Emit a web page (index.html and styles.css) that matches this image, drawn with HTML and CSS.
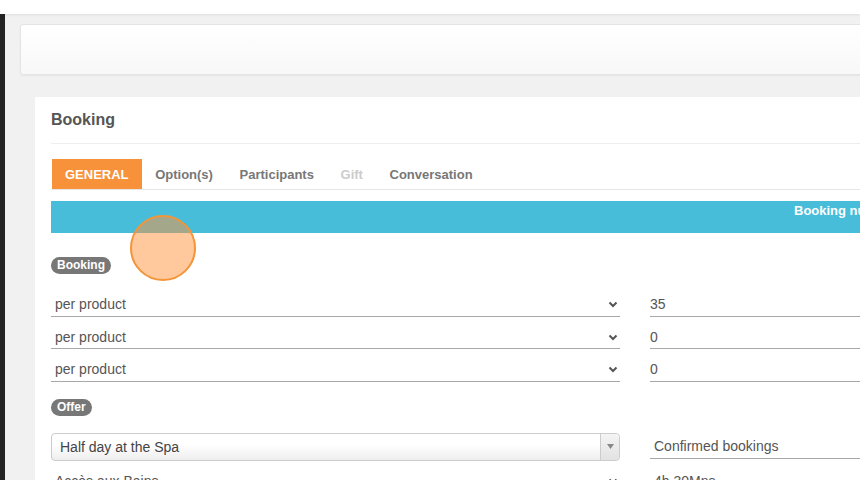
FILE: index.html
```html
<!DOCTYPE html>
<html lang="en">
<head>
  <meta charset="UTF-8">
  <title>Booking</title>
  <link rel="stylesheet" href="styles.css">
</head>
<body>

  <div class="topbar"></div>

  <div class="layout">
    <aside class="sidebar"></aside>

    <main class="content">
      <div class="toolbar-card"></div>

      <section class="card">
        <h2 class="card-title">Booking</h2>

        <nav class="tabs">
          <a class="tab active">GENERAL</a>
          <a class="tab">Option(s)</a>
          <a class="tab">Participants</a>
          <a class="tab disabled">Gift</a>
          <a class="tab">Conversation</a>
        </nav>

        <div class="status-bar">Booking number : 10458</div>

        <span class="badge badge-first">Booking</span>

        <div class="form-grid">
          <div class="field select">per product
            <svg class="chevron" width="10" height="7" viewBox="0 0 10 7"><polyline points="1.5,1.5 5,5 8.5,1.5" fill="none" stroke="#555" stroke-width="2"/></svg>
          </div>
          <div class="field number">35</div>

          <div class="field select">per product
            <svg class="chevron" width="10" height="7" viewBox="0 0 10 7"><polyline points="1.5,1.5 5,5 8.5,1.5" fill="none" stroke="#555" stroke-width="2"/></svg>
          </div>
          <div class="field number">0</div>

          <div class="field select">per product
            <svg class="chevron" width="10" height="7" viewBox="0 0 10 7"><polyline points="1.5,1.5 5,5 8.5,1.5" fill="none" stroke="#555" stroke-width="2"/></svg>
          </div>
          <div class="field number">0</div>
        </div>

        <span class="badge badge-offer">Offer</span>

        <div class="form-grid offer-grid">
          <div class="combo">
            <span class="combo-text">Half day at the Spa</span>
            <span class="combo-arrow">
              <svg width="7" height="5" viewBox="0 0 7 5"><polygon points="0,0 7,0 3.5,5" fill="#888"/></svg>
            </span>
          </div>
          <div class="field short">Confirmed bookings</div>

          <div class="field select">Accès aux Bains
            <svg class="chevron" width="10" height="7" viewBox="0 0 10 7"><polyline points="1.5,1.5 5,5 8.5,1.5" fill="none" stroke="#555" stroke-width="2"/></svg>
          </div>
          <div class="field">4h 30Mns</div>
        </div>
      </section>
    </main>
  </div>

  <div class="cursor-dot"></div>

</body>
</html>
```

FILE: styles.css
```css
body {
  margin: 0;
  background: #f1f1f1;
  font-family: 'Liberation Sans', Arial, sans-serif;
  color: #555;
  overflow: hidden;
  height: 480px;
  position: relative;
}
.topbar {
  height: 14px;
  background: #fff;
  box-shadow: 0 1px 3px rgba(0, 0, 0, 0.08);
  position: relative;
  z-index: 2;
}
.layout {
  display: flex;
  width: 1300px;
}
.sidebar {
  width: 5px;
  background: #232323;
  height: 466px;
}
.content {
  flex: 1;
  padding: 10px 0 0 15px;
}
.toolbar-card {
  height: 49px;
  background: linear-gradient(#fff, #f8f8f8);
  border: 1px solid #e4e4e4;
  border-radius: 3px;
  box-shadow: 0 1px 2px rgba(0, 0, 0, 0.05);
  margin-bottom: 22px;
}
.card {
  background: #fff;
  margin-left: 15px;
  width: 1152px;
  padding: 0 16px;
  height: 400px;
}
.card-title {
  margin: 0;
  padding: 13px 0 13px;
  font-size: 16px;
  line-height: 20px;
  font-weight: bold;
  color: #555;
  border-bottom: 1px solid #eee;
}
.tabs {
  display: flex;
  gap: 0.6px;
  margin-top: 15px;
  padding-left: 1px;
  border-bottom: 1px solid #e6e6e6;
}
.tab {
  height: 30px;
  line-height: 31px;
  padding: 0 13px;
  font-size: 13px;
  font-weight: bold;
  color: #777;
}
.tab.active {
  background: #f7913a;
  color: #fff;
}
.tab.disabled {
  color: #ccc;
}
.status-bar {
  margin-top: 11px;
  height: 32px;
  box-sizing: border-box;
  padding: 1px 0 0 743px;
  line-height: 18px;
  background: #48bdd9;
  color: #fff;
  font-size: 13px;
  font-weight: bold;
}
.badge {
  display: inline-block;
  height: 17px;
  line-height: 17px;
  padding: 0 6px;
  border-radius: 9px;
  background: #777;
  color: #fff;
  font-size: 12px;
  font-weight: bold;
}
.badge-first {
  margin-top: 24px;
}
.badge-offer {
  margin-top: 17px;
}
.form-grid {
  display: grid;
  grid-template-columns: 569px 1fr;
  column-gap: 30px;
  margin-top: 10px;
}
.offer-grid {
  margin-top: 17px;
}
.field {
  height: 32.5px;
  box-sizing: border-box;
  padding: 10px 0 0 4px;
  line-height: 20px;
  font-size: 14px;
  color: #555;
  border-bottom: 1px solid #a8a8a8;
  display: flex;
  align-items: flex-start;
}
.field.number {
  padding-left: 0;
}
.field.select {
  justify-content: space-between;
  padding-right: 2px;
}
.chevron {
  margin-top: 7px;
}
.field.short {
  height: 26px;
  padding-top: 3px;
}
.combo {
  height: 28px;
  box-sizing: border-box;
  border: 1px solid #ccc;
  border-radius: 4px;
  background: linear-gradient(#fff 40%, #eee);
  display: flex;
  align-items: stretch;
}
.combo-text {
  flex: 1;
  padding-left: 8px;
  line-height: 26px;
  font-size: 14px;
  color: #444;
}
.combo-arrow {
  width: 18px;
  border-left: 1px solid #ccc;
  border-radius: 0 4px 4px 0;
  background: linear-gradient(#f4f4f4, #e2e2e2);
  display: flex;
  align-items: center;
  justify-content: center;
}
.cursor-dot {
  position: absolute;
  left: 130px;
  top: 215px;
  width: 62px;
  height: 62px;
  border: 2px solid #f39539;
  border-radius: 50%;
  background: rgba(255, 145, 60, 0.5);
}
```
